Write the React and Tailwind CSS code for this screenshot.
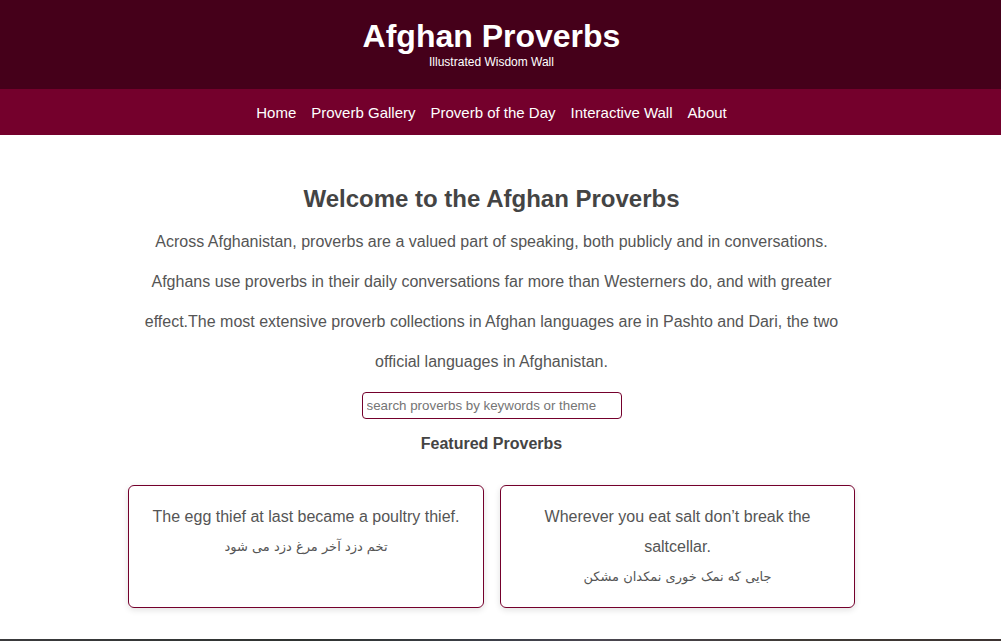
export default function App() {
  const font = { fontFamily: '"Liberation Sans", Arial, "Noto Sans", sans-serif' };
  return (
    <div className="w-[1001px] bg-white" style={font}>
      <header className="h-[89px] bg-[#45001a]">
        <div className="w-[983px] pt-[18px] flex flex-col items-center text-white">
          <h1 className="text-[32px] font-bold leading-[37px]">Afghan Proverbs</h1>
          <p className="text-[12px] leading-[14px] mt-[0px]">Illustrated Wisdom Wall</p>
        </div>
      </header>
      <nav className="h-[46px] bg-[#74002c]">
        <ul className="w-[983px] h-full pt-[2px] flex items-center justify-center gap-[15px] text-white text-[15px]">
          <li>Home</li>
          <li>Proverb Gallery</li>
          <li>Proverb of the Day</li>
          <li>Interactive Wall</li>
          <li>About</li>
        </ul>
      </nav>
      <main className="w-[983px] flex flex-col items-center pt-[50px] pb-[31px]">
        <h2 className="text-[24px] leading-[28px] font-bold text-[#444444]">Welcome to the Afghan Proverbs</h2>
        <p className="w-[720px] mt-[9px] text-center text-[16px] leading-[40px] text-[#555555]">
          Across Afghanistan, proverbs are a valued part of speaking, both publicly and in conversations. Afghans use proverbs in their daily conversations far more than Westerners do, and with greater effect.The most extensive proverb collections in Afghan languages are in Pashto and Dari, the two official languages in Afghanistan.
        </p>
        <input
          type="text"
          placeholder="search proverbs by keywords or theme"
          className="mt-[10px] w-[260px] h-[27px] border border-[#74002c] rounded-[4px] px-[4px] text-[13.33px] text-[#333] placeholder:text-[#757575] outline-none"
          style={font}
        />
        <h3 className="mt-[16px] text-[16px] leading-[18px] font-bold text-[#444444]">Featured Proverbs</h3>
        <div className="mt-[32px] grid grid-cols-[356px_355px] gap-[16px]">
          <div className="border border-[#74002c] rounded-[6px] shadow-[0_2px_6px_rgba(0,0,0,0.12)] px-[15px] pt-[16px] pb-[15px] text-center text-[#555555]">
            <p className="text-[16px] leading-[30px]">The egg thief at last became a poultry thief.</p>
            <p className="leading-[30px]" dir="rtl" style={{ fontFamily: '"DejaVu Sans", "Noto Sans", sans-serif', fontSize: '13px' }}>تخم دزد آخر مرغ دزد می شود</p>
          </div>
          <div className="border border-[#74002c] rounded-[6px] shadow-[0_2px_6px_rgba(0,0,0,0.12)] px-[15px] pt-[16px] pb-[15px] text-center text-[#555555]">
            <p className="text-[16px] leading-[30px] px-[8px]">Wherever you eat salt don’t break the saltcellar.</p>
            <p className="leading-[30px]" dir="rtl" style={{ fontFamily: '"DejaVu Sans", "Noto Sans", sans-serif', fontSize: '13px' }}>جایی که نمک خوری نمکدان مشکن</p>
          </div>
        </div>
      </main>
      <div className="h-[200px] bg-[linear-gradient(90deg,#3a3a3c_0%,#2f3331_30%,#3c3f48_50%,#4a4650_60%,#3f3a36_80%,#3c3331_100%)]"></div>
    </div>
  );
}
